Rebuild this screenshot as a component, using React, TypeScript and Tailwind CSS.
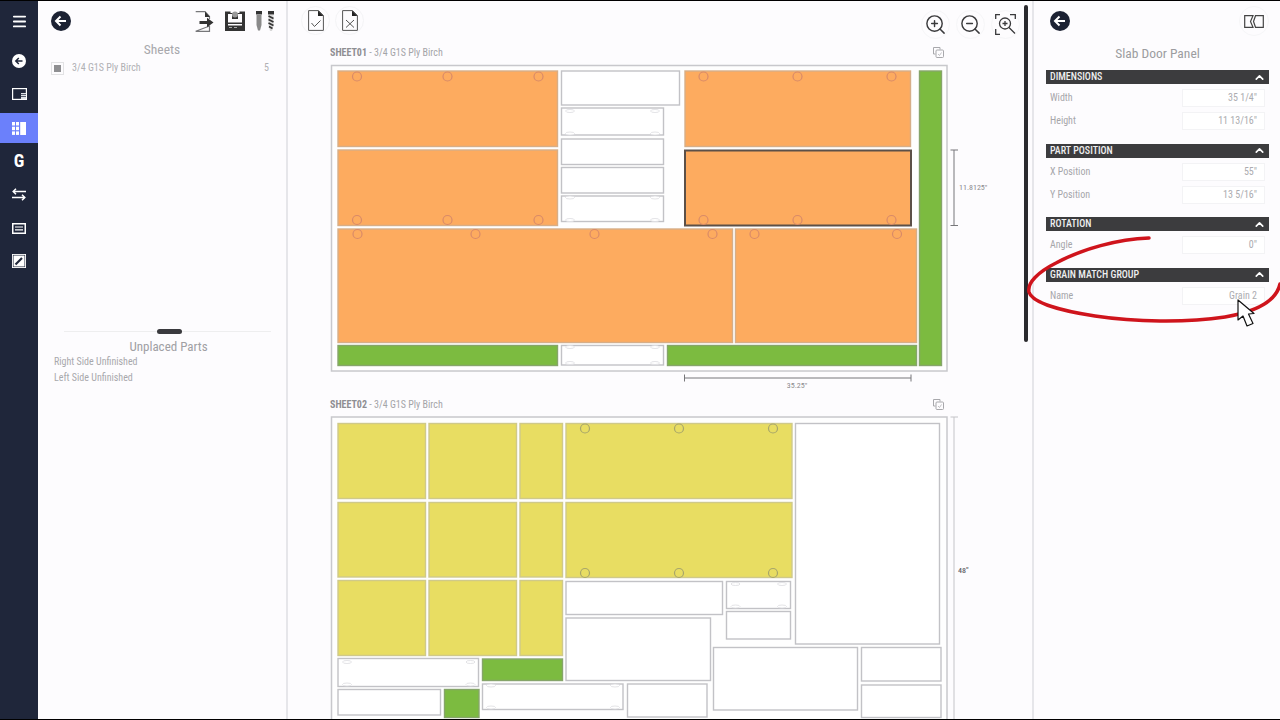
import React from 'react';
import { Menu, ZoomIn, ZoomOut, ChevronUp } from 'lucide-react';

type Kind = 'orange' | 'green' | 'yellow' | 'white' | 'selected';
type Part = [Kind, number, number, number, number];

const fills: Record<Kind, string> = {
  orange: '#fdab5f',
  green: '#7cbb40',
  yellow: '#e8dd62',
  white: '#ffffff',
  selected: '#fdab5f',
};

const strokes: Record<Kind, string> = {
  orange: '#d6ae88',
  green: '#86a56a',
  yellow: '#cfc98a',
  white: '#c2c2c6',
  selected: '#5c5048',
};

const sheet1Parts: Part[] = [
  ['orange', 337.5, 70.5, 558, 147],
  ['orange', 337.5, 149.5, 558, 226],
  ['orange', 684.5, 70.5, 911, 147],
  ['selected', 684.5, 150, 911.5, 226],
  ['orange', 337.5, 228.5, 733, 343],
  ['orange', 735, 228.5, 917, 343],
  ['green', 919, 70.5, 942, 366],
  ['green', 337.5, 345, 558, 366],
  ['green', 667, 345, 917, 366],
  ['white', 561, 345, 664, 365.5],
  ['white', 561, 70.5, 680, 105.5],
  ['white', 561, 107.5, 664, 135.5],
  ['white', 561, 138.5, 664, 165],
  ['white', 561, 167, 664, 193.5],
  ['white', 561, 195.5, 664, 222],
];

const sheet1Holes: [number, number][] = [
  [357, 76.5], [447.5, 76.5], [538.5, 76.5],
  [357, 220], [447.5, 220], [538.5, 220],
  [703.5, 76.5], [797.5, 76.5], [891.5, 76.5],
  [703.5, 220], [797.5, 220], [891.5, 220],
  [357.5, 234], [475.5, 234], [594.5, 234], [712.5, 234],
  [754.5, 234], [897, 234],
];

const sheet1Slots: [number, number][] = [
  [570, 111], [655, 111], [570, 133.5], [655, 133.5],
  [570, 197.5], [655, 197.5], [570, 220], [655, 220],
  [570, 347], [655, 347], [570, 363], [655, 363],
];

const sheet2Parts: Part[] = [
  ['yellow', 337.5, 423, 426, 499],
  ['yellow', 428.5, 423, 517, 499],
  ['yellow', 519.5, 423, 563, 499],
  ['yellow', 565.5, 423, 792.5, 499],
  ['yellow', 337.5, 502, 426, 577.5],
  ['yellow', 428.5, 502, 517, 577.5],
  ['yellow', 519.5, 502, 563, 577.5],
  ['yellow', 565.5, 502, 792.5, 578],
  ['yellow', 337.5, 580, 426, 656],
  ['yellow', 428.5, 580, 517, 656],
  ['yellow', 519.5, 580, 563, 656],
  ['white', 795, 423, 940, 644.5],
  ['white', 565.5, 581, 723, 615],
  ['white', 565.5, 617.5, 711, 681],
  ['white', 726, 581, 791, 609],
  ['white', 726, 611, 791, 639.5],
  ['white', 713, 647, 858, 710.5],
  ['white', 861, 647, 941.5, 681.5],
  ['white', 861, 684.5, 941.5, 718],
  ['white', 627, 683.5, 707.5, 717.5],
  ['white', 482, 683.5, 623.5, 710],
  ['green', 482, 658.5, 563, 681],
  ['white', 337.5, 658, 479, 687],
  ['white', 337.5, 689, 441, 715.5],
  ['green', 444, 689, 479.5, 718],
];

const sheet2Holes: [number, number][] = [
  [585, 428.5], [679, 428.5], [773, 428.5],
  [585, 573], [679, 573], [773, 573],
];

const sheet2Slots: [number, number][] = [
  [347, 662], [470.5, 662], [347, 684.5], [470.5, 684.5],
  [491, 685.5], [615, 685.5], [491, 707.5], [615, 707.5],
  [735.5, 584], [782, 584], [735.5, 606.5], [782, 606.5],
];

const BackIcon = ({ size = 20 }: { size?: number }) => (
  <svg width={size} height={size} viewBox="0 0 20 20">
    <circle cx="10" cy="10" r="10" fill="#1c2233" />
    <path d="M15 10H5.5M9.5 5.5 5 10l4.500 4.500" fill="none" stroke="#fff" strokeWidth="2" />
  </svg>
);

const SideIcon = ({ name }: { name: string }) => {
  if (name === 'back')
    return (
      <svg width="14" height="14" viewBox="0 0 14 14">
        <circle cx="7" cy="7" r="7" fill="#fff" />
        <path d="M10.500 7H4M6.800 4 3.800 7l3 3" fill="none" stroke="#1f263a" strokeWidth="1.500" />
      </svg>
    );
  if (name === 'panel')
    return (
      <svg width="15" height="12" viewBox="0 0 15 12">
        <rect x="0.600" y="0.600" width="13.800" height="10.800" fill="none" stroke="#fff" strokeWidth="1.200" />
        <rect x="9" y="5" width="5" height="6" fill="#dfe2e8" />
        <path d="M9 6.500h5M9 8.500h5" stroke="#1f263a" strokeWidth="0.700" />
      </svg>
    );
  if (name === 'grid')
    return (
      <svg width="14" height="13" viewBox="0 0 14 13" fill="#fff">
        <rect x="0" y="0" width="3" height="3.500" />
        <rect x="4" y="0" width="3" height="3.500" />
        <rect x="0" y="4.700" width="3" height="3.500" />
        <rect x="4" y="4.700" width="3" height="3.500" />
        <rect x="0" y="9.400" width="3" height="3.500" />
        <rect x="4" y="9.400" width="3" height="3.500" />
        <rect x="8.200" y="0" width="5.800" height="13" />
      </svg>
    );
  if (name === 'swap')
    return (
      <svg width="14" height="13" viewBox="0 0 14 13" fill="none" stroke="#fff" strokeWidth="1.500">
        <path d="M14 3.500H1.500M4 0.800 1.200 3.500 4 6.200" />
        <path d="M0 9.500h12.500M10 6.800l2.800 2.700-2.800 2.700" />
      </svg>
    );
  if (name === 'list')
    return (
      <svg width="14" height="11" viewBox="0 0 14 11">
        <rect x="0.750" y="0.750" width="12.500" height="9.500" fill="none" stroke="#fff" strokeWidth="1.500" />
        <path d="M3 4h8M3 6.800h8" stroke="#fff" strokeWidth="1.200" />
      </svg>
    );
  return (
    <svg width="14" height="14" viewBox="0 0 14 14">
      <rect width="14" height="14" fill="#fff" />
      <rect x="1.200" y="1.200" width="11.600" height="11.600" fill="none" stroke="#1f263a" strokeWidth="0.600" />
      <path d="M3.500 10.500 10 4" stroke="#1f263a" strokeWidth="2.200" />
    </svg>
  );
};

const FileBadge = ({ mark }: { mark: 'check' | 'x' }) => (
  <div className="w-[29px] h-[29px] rounded-full border border-[#f4f4f6] flex items-center justify-center">
    <svg width="16" height="21" viewBox="0 0 16 21" fill="none">
      <path d="M0.600 0.600H10.500L15.400 5.500V20.400H0.600Z" stroke="#555" strokeWidth="1" />
      <path d="M10 0.500 15.500 6H10Z" fill="#222" />
      {mark === 'check' ? (
        <path d="M3.500 13 6.500 16.500 12.500 10.500" stroke="#555" strokeWidth="1" />
      ) : (
        <path d="M4 10 12 17.500M12 10 4 17.500" stroke="#555" strokeWidth="1" />
      )}
    </svg>
  </div>
);

const CopyIcon = () => (
  <svg width="11" height="11" viewBox="0 0 11 11" fill="none" stroke="#a8a8ac" strokeWidth="1">
    <path d="M7 2.500V0.500H0.500V7H2.500" />
    <rect x="3" y="3" width="7.500" height="7.500" rx="1" />
    <path d="M5 7 6.500 8.500 8.500 5.500" strokeWidth="0.700" />
  </svg>
);

const SheetDrawing = ({
  viewBox,
  height,
  outer,
  parts,
  holes,
  slots,
  children,
}: {
  viewBox: string;
  height: number;
  outer: [number, number, number, number];
  parts: Part[];
  holes: [number, number][];
  slots: [number, number][];
  children?: React.ReactNode;
}) => (
  <svg width="736" height={height} viewBox={viewBox} className="block shrink-0">
    <rect x={outer[0]} y={outer[1]} width={outer[2] - outer[0]} height={outer[3] - outer[1]} fill="#fefefe" stroke="#c8c8cc" strokeWidth="1.500" />
    {parts.map(([kind, x1, y1, x2, y2], i) => (
      <rect
        key={i}
        x={x1 + 0.5}
        y={y1 + 0.5}
        width={x2 - x1 - 1}
        height={y2 - y1 - 1}
        fill={fills[kind]}
        stroke={strokes[kind]}
        strokeWidth={kind === 'selected' ? 2 : 1.4}
      />
    ))}
    {holes.map(([cx, cy], i) => (
      <circle key={i} cx={cx} cy={cy} r="4.500" fill="none" stroke={cy > 400 ? '#a8a66a' : '#d98a68'} strokeWidth="1.200" />
    ))}
    {slots.map(([cx, cy], i) => (
      <ellipse key={i} cx={cx} cy={cy} rx="4.500" ry="1.500" fill="#fff" stroke="#dcdce0" strokeWidth="0.800" />
    ))}
    {children}
  </svg>
);

const Field = ({ label, value }: { label: string; value: string }) => (
  <div className="flex items-center justify-between h-[18px] mt-[5px] pl-1 pr-1">
    <span className="pb-px text-[10px] text-[#a6a6aa]">{label}</span>
    <div className="w-[83px] h-[18px] border border-[#f3f3f5] bg-white flex items-center justify-end pr-[7px] pb-px text-[10px] text-[#acacb0]">
      {value}
    </div>
  </div>
);

const Section = ({ title, children }: { title: string; children: React.ReactNode }) => (
  <section className="mb-[13.5px]">
    <div className="h-[14px] bg-[#3c3c3e] flex items-center justify-between pl-1 pr-[3px]">
      <span className="pb-px text-[10px] font-medium text-[#efeff0]">{title}</span>
      <ChevronUp className="w-[13px] h-[13px] text-white" strokeWidth={3} />
    </div>
    {children}
  </section>
);

export default function App() {
  return (
    <div className="relative w-[1280px] h-[720px] flex border-y border-black bg-[#fdfcfe] overflow-hidden [font-family:Roboto,sans-serif] [font-stretch:75%]">
      {/* sidebar */}
      <nav className="w-[38px] shrink-0 bg-[#1f263a] flex flex-col items-center text-white">
        <div className="h-10 w-full flex items-center justify-center">
          <Menu className="w-[17px] h-[17px]" strokeWidth={2.500} />
        </div>
        <div className="h-[33px] mt-[3px] w-full flex items-center justify-center"><SideIcon name="back" /></div>
        <div className="h-[36px] pb-[3px] w-full flex items-center justify-center"><SideIcon name="panel" /></div>
        <div className="h-[30px] w-full bg-[#6b80fb] flex items-center justify-center"><SideIcon name="grid" /></div>
        <div className="h-[36px] w-full flex items-center justify-center text-[18px] font-bold leading-none">G</div>
        <div className="h-[30px] w-full flex items-center justify-center"><SideIcon name="swap" /></div>
        <div className="h-[38px] w-full flex items-center justify-center"><SideIcon name="list" /></div>
        <div className="h-[28px] w-full flex items-center justify-center"><SideIcon name="edit" /></div>
      </nav>

      {/* sheets list */}
      <aside className="w-[250px] shrink-0 border-r-2 border-[#e6e6ea] flex flex-col">
        <div className="h-[40px] flex items-center justify-between pl-[13px] pr-[12px]">
          <BackIcon />
          <div className="flex items-center gap-[11px]">
            <svg width="19" height="21" viewBox="0 0 19 21" fill="none">
              <path d="M0.700 0.700H10L14.500 5.500V8M14.500 15V20.300H0.700Z" stroke="#77777a" strokeWidth="1.200" />
              <path d="M10 0.500 15 6H10Z" fill="#333" />
              <path d="M4.500 10H12V6.800L18.500 11.500 12 16.200V13H4.500Z" fill="#333" />
            </svg>
            <svg width="20" height="20" viewBox="0 0 20 20">
              <path d="M0 0.500H5.500V2H14.500V0.500H20V20H0Z" fill="#333" />
              <circle cx="10" cy="3.500" r="3" fill="#9a9a9a" />
              <path d="M3 3V11.500H17V3H13V8H7V3Z" fill="#fdfcfe" />
              <rect x="3" y="13" width="14" height="1.500" fill="#fdfcfe" />
              <path d="M4 16.500H7M9 16.500H12" stroke="#aaa" strokeWidth="1" />
            </svg>
            <svg width="18" height="21" viewBox="0 0 18 21">
              <path d="M0 0H6V3.500H0Z" fill="#333" />
              <path d="M0.500 4H5.500V14L4 19.500H2L0.500 14Z" fill="#8a8a8a" />
              <path d="M12 0H18V3.500H12Z" fill="#333" />
              <path d="M12.500 4H17.500V14L16 20H14L12.500 14Z" fill="#d8d8d8" />
              <path d="M12.500 5 17.500 7.500M12.500 8.500 17.500 11M12.500 12 17.500 14.500M13 15.500 16.500 17.500" stroke="#333" strokeWidth="1.600" />
            </svg>
          </div>
        </div>
        <h2 className="h-[17px] flex items-center justify-center text-[13.500px] text-[#a8a8ac] font-normal mb-[2px]">Sheets</h2>
        <div className="flex items-center h-[14px] pl-[13px] pr-[17px] mt-[1px]">
          <span className="w-[13px] h-[13px] border border-[#e2e2e4] flex items-center justify-center">
            <span className="w-[7px] h-[7px] bg-[#8f8f92]" />
          </span>
          <span className="ml-2 flex-1 pb-px text-[10px] text-[#b0b0b4]">3/4 G1S Ply Birch</span>
          <span className="pb-px text-[10px] text-[#b0b0b4]">5</span>
        </div>
        <div className="mt-[256px] ml-[26px] mr-[15px] relative h-px bg-[#eeeeef]">
          <span className="absolute left-[93px] -top-[2px] w-[25px] h-[5px] rounded-full bg-[#3a3a3e]" />
        </div>
        <h2 className="ml-[28px] mr-[15px] mt-[6px] text-center text-[13px] leading-[17px] text-[#a0a0a4] font-normal">Unplaced Parts</h2>
        <div className="ml-[16px] -mt-px text-[10px] leading-[16px] text-[#a8a8ac]">
          <div>Right Side Unfinished</div>
          <div>Left Side Unfinished</div>
        </div>
      </aside>

      {/* canvas */}
      <main className="w-[736px] shrink-0 flex flex-col overflow-hidden">
        <div className="h-[43px] shrink-0 flex items-start justify-between pl-[13px] pr-1 pt-[5px]">
          <div className="flex gap-[5px]"><FileBadge mark="check" /><FileBadge mark="x" /></div>
          <div className="flex gap-[6px] mt-[4px] text-[#3a3a3c]">
            <div className="w-[29px] h-[29px] rounded-full border border-[#f6f6f8] flex items-center justify-center">
              <ZoomIn className="w-[23px] h-[23px]" strokeWidth={1.500} />
            </div>
            <div className="w-[29px] h-[29px] rounded-full border border-[#f6f6f8] flex items-center justify-center">
              <ZoomOut className="w-[23px] h-[23px]" strokeWidth={1.500} />
            </div>
            <div className="w-[29px] h-[29px] rounded-full border border-[#f6f6f8] flex items-center justify-center">
              <svg width="21" height="21" viewBox="0 0 21 21" fill="none" stroke="#3a3a3c" strokeWidth="1.300">
                <path d="M0.700 5V0.700H5M15 0.700H20.300V5M0.700 15V20.300H5" />
                <circle cx="10" cy="9.500" r="5.500" />
                <path d="M10 7V12M7.500 9.500H12.500M14 13.500 20 19.500" />
              </svg>
            </div>
          </div>
        </div>

        <div className="h-[18px] shrink-0 flex items-center justify-between pl-[42px] pr-[80px] pb-[2px] text-[10px] text-[#a4a4a8]">
          <span><b className="font-bold text-[#8e8e92]">SHEET01</b> - 3/4 G1S Ply Birch</span>
          <CopyIcon />
        </div>
        <SheetDrawing viewBox="288 62 736 334" height={334} outer={[331.5, 65.5, 947, 371]} parts={sheet1Parts} holes={sheet1Holes} slots={sheet1Slots}>
          <path d="M954 150V225.500M950.500 150H958M950.500 225.500H958" stroke="#77777a" strokeWidth="1" fill="none" />
          <text x="959" y="189.500" fontSize="8" fill="#8a8a8e">11.8125"</text>
          <path d="M684.500 374.500V381.500M684.500 378H911M911 374.500V381.500" stroke="#77777a" strokeWidth="1" fill="none" />
          <text x="797" y="388" fontSize="8" fill="#8a8a8e" textAnchor="middle">35.25"</text>
        </SheetDrawing>

        <div className="h-[18px] shrink-0 flex items-center justify-between pl-[42px] pr-[80px] pb-[2px] text-[10px] text-[#a4a4a8]">
          <span><b className="font-bold text-[#8e8e92]">SHEET02</b> - 3/4 G1S Ply Birch</span>
          <CopyIcon />
        </div>
        <SheetDrawing viewBox="288 414 736 306" height={306} outer={[331.5, 417, 947, 760]} parts={sheet2Parts} holes={sheet2Holes} slots={sheet2Slots}>
          <path d="M954 417V720M950.500 417H958" stroke="#c4c4c8" strokeWidth="1" fill="none" />
          <text x="958" y="573" fontSize="8" fontWeight="500" fill="#66666a">48"</text>
        </SheetDrawing>
      </main>

      {/* scrollbar */}
      <div className="w-2 shrink-0 pt-[4px]">
        <div className="w-1 h-[337px] bg-[#2a2a2e] rounded-sm" />
      </div>

      {/* part properties */}
      <aside className="flex-1 border-l-2 border-[#e6e6ea] pl-[12px] pr-[11px]">
        <div className="h-[40px] flex items-center justify-between pl-[2px] pr-0">
          <span className="ml-[2px]"><BackIcon /></span>
          <div className="w-[30px] h-[30px] rounded-full border border-[#f6f6f8] flex items-center justify-center">
            <svg width="20" height="13" viewBox="0 0 20 13" fill="none" stroke="#444" strokeWidth="1.200">
              <path d="M0.700 0.700H9L6.500 6.500 9 12.300H0.700Z" />
              <path d="M19.300 0.700H11.500L9.500 6.500 11.500 12.300H19.300Z" />
            </svg>
          </div>
        </div>
        <h1 className="h-[29px] pb-1 flex items-center justify-center text-[13.500px] font-normal text-[#9c9ca0]">Slab Door Panel</h1>
        <Section title="DIMENSIONS">
          <Field label="Width" value={'35 1/4"'} />
          <Field label="Height" value={'11 13/16"'} />
        </Section>
        <Section title="PART POSITION">
          <Field label="X Position" value={'55"'} />
          <Field label="Y Position" value={'13 5/16"'} />
        </Section>
        <Section title="ROTATION">
          <Field label="Angle" value={'0"'} />
        </Section>
        <Section title="GRAIN MATCH GROUP">
          <Field label="Name" value="Grain 2" />
        </Section>
      </aside>

      {/* video annotation */}
      <svg className="absolute left-0 -top-px pointer-events-none" width="1280" height="720" viewBox="0 0 1280 720" fill="none">
        <path
          d="M1149 238C1118 239 1082 249 1056 263C1038 272 1027 283 1029 292C1032 303 1062 311 1095 316C1135 322 1185 323 1225 317C1255 312 1276 302 1280 284"
          stroke="#cf141c"
          strokeWidth="3.500"
          strokeLinecap="round"
        />
        <path
          d="M1238 300V320L1243 316L1247 326L1253 323.500L1248.500 314L1254 313.500Z"
          fill="#fff"
          stroke="#111"
          strokeWidth="1.200"
          strokeLinejoin="round"
        />
      </svg>
    </div>
  );
}
